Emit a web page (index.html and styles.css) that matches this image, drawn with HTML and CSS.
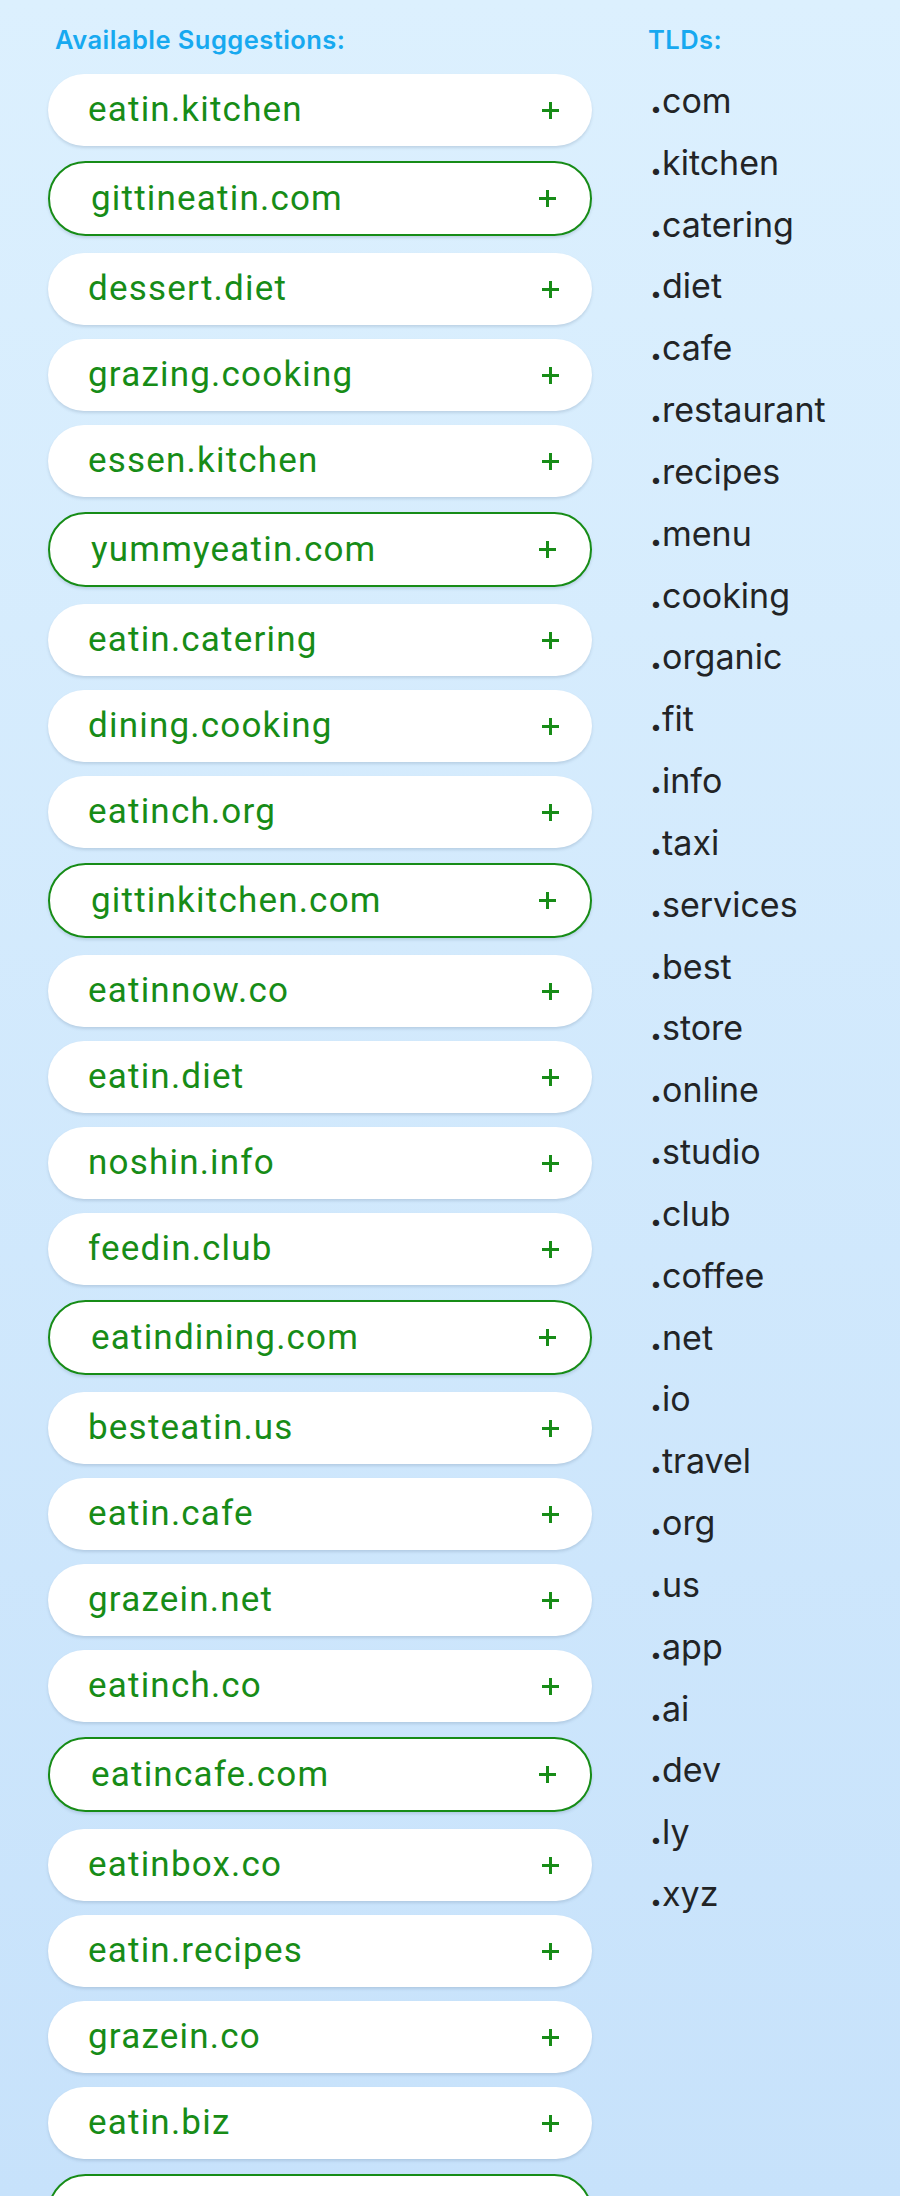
FILE: index.html
```html
<!DOCTYPE html>
<html lang="en">
<head>
<meta charset="utf-8">
<title>Suggestions</title>
<link rel="stylesheet" href="styles.css">
</head>
<body>
<div class="page">
  <section class="suggestions">
    <h2 class="heading heading-left">Available Suggestions:</h2>
    <ul class="pills">
      <li class="pill"><span class="name">eatin.kitchen</span><span class="plus"></span></li>
      <li class="pill pill-com"><span class="name">gittineatin.com</span><span class="plus"></span></li>
      <li class="pill"><span class="name">dessert.diet</span><span class="plus"></span></li>
      <li class="pill"><span class="name">grazing.cooking</span><span class="plus"></span></li>
      <li class="pill"><span class="name">essen.kitchen</span><span class="plus"></span></li>
      <li class="pill pill-com"><span class="name">yummyeatin.com</span><span class="plus"></span></li>
      <li class="pill"><span class="name">eatin.catering</span><span class="plus"></span></li>
      <li class="pill"><span class="name">dining.cooking</span><span class="plus"></span></li>
      <li class="pill"><span class="name">eatinch.org</span><span class="plus"></span></li>
      <li class="pill pill-com"><span class="name">gittinkitchen.com</span><span class="plus"></span></li>
      <li class="pill"><span class="name">eatinnow.co</span><span class="plus"></span></li>
      <li class="pill"><span class="name">eatin.diet</span><span class="plus"></span></li>
      <li class="pill"><span class="name">noshin.info</span><span class="plus"></span></li>
      <li class="pill"><span class="name">feedin.club</span><span class="plus"></span></li>
      <li class="pill pill-com"><span class="name">eatindining.com</span><span class="plus"></span></li>
      <li class="pill"><span class="name">besteatin.us</span><span class="plus"></span></li>
      <li class="pill"><span class="name">eatin.cafe</span><span class="plus"></span></li>
      <li class="pill"><span class="name">grazein.net</span><span class="plus"></span></li>
      <li class="pill"><span class="name">eatinch.co</span><span class="plus"></span></li>
      <li class="pill pill-com"><span class="name">eatincafe.com</span><span class="plus"></span></li>
      <li class="pill"><span class="name">eatinbox.co</span><span class="plus"></span></li>
      <li class="pill"><span class="name">eatin.recipes</span><span class="plus"></span></li>
      <li class="pill"><span class="name">grazein.co</span><span class="plus"></span></li>
      <li class="pill"><span class="name">eatin.biz</span><span class="plus"></span></li>
      <li class="pill pill-com"></li>
    </ul>
  </section>
  <section class="tlds">
    <h2 class="heading">TLDs:</h2>
    <ul class="tld-list">
      <li><b>.</b>com</li>
      <li><b>.</b>kitchen</li>
      <li><b>.</b>catering</li>
      <li><b>.</b>diet</li>
      <li><b>.</b>cafe</li>
      <li><b>.</b>restaurant</li>
      <li><b>.</b>recipes</li>
      <li><b>.</b>menu</li>
      <li><b>.</b>cooking</li>
      <li><b>.</b>organic</li>
      <li><b>.</b>fit</li>
      <li><b>.</b>info</li>
      <li><b>.</b>taxi</li>
      <li><b>.</b>services</li>
      <li><b>.</b>best</li>
      <li><b>.</b>store</li>
      <li><b>.</b>online</li>
      <li><b>.</b>studio</li>
      <li><b>.</b>club</li>
      <li><b>.</b>coffee</li>
      <li><b>.</b>net</li>
      <li><b>.</b>io</li>
      <li><b>.</b>travel</li>
      <li><b>.</b>org</li>
      <li><b>.</b>us</li>
      <li><b>.</b>app</li>
      <li><b>.</b>ai</li>
      <li><b>.</b>dev</li>
      <li><b>.</b>ly</li>
      <li><b>.</b>xyz</li>
    </ul>
  </section>
</div>
</body>
</html>
```

FILE: styles.css
```css
html, body {
  margin: 0;
  padding: 0;
}
body {
  background: linear-gradient(180deg, #dcf0fe 0%, #c7e2fb 100%);
  min-height: 2196px;
  font-family: Inter, "Liberation Sans", sans-serif;
  overflow: hidden;
}
.page {
  display: flex;
  padding: 25px 0 0 48px;
  height: 2171px;
  overflow: hidden;
}
.suggestions {
  width: 544px;
  flex: none;
}
.tlds {
  margin-left: 56px;
}
.heading {
  margin: 0;
  font-size: 25.5px;
  letter-spacing: 0.45px;
  line-height: 30px;
  font-weight: 600;
  color: #17a9f0;
}
.heading-left {
  padding-left: 7px;
}
.pills {
  list-style: none;
  margin: 19px 0 0 0;
  padding: 0;
  display: flex;
  flex-direction: column;
  gap: 14px;
}
.pill {
  box-sizing: border-box;
  height: 72px;
  flex: none;
  display: flex;
  align-items: center;
  justify-content: space-between;
  padding: 0 33px 0 40px;
  background: #fff;
  border-radius: 36px;
  box-shadow: 0 2px 3px rgba(60, 90, 120, 0.18);
}
.pill-com {
  height: 75px;
  margin: 1px 0 3px 0;
  border: 2px solid #178c17;
  border-radius: 38px;
  padding: 0 34px 0 41px;
}
.name {
  font-family: Roboto, "Noto Sans", sans-serif;
  font-size: 35px;
  letter-spacing: 1.2px;
  color: #178c17;
  line-height: 40px;
}
.plus {
  position: relative;
  width: 17px;
  height: 17px;
  flex: none;
}
.plus::before,
.plus::after {
  content: "";
  position: absolute;
  background: #178c17;
}
.plus::before {
  left: 0;
  right: 0;
  top: 7px;
  height: 3px;
}
.plus::after {
  top: 0;
  bottom: 0;
  left: 7px;
  width: 3px;
}
.tld-list {
  list-style: none;
  margin: 15px 0 0 0;
  padding: 0 0 0 2px;
}
.tld-list li {
  font-size: 34px;
  line-height: 61.84px;
  color: #222426;
  height: 61.84px;
}
.tld-list b {
  font-weight: 800;
}
```
